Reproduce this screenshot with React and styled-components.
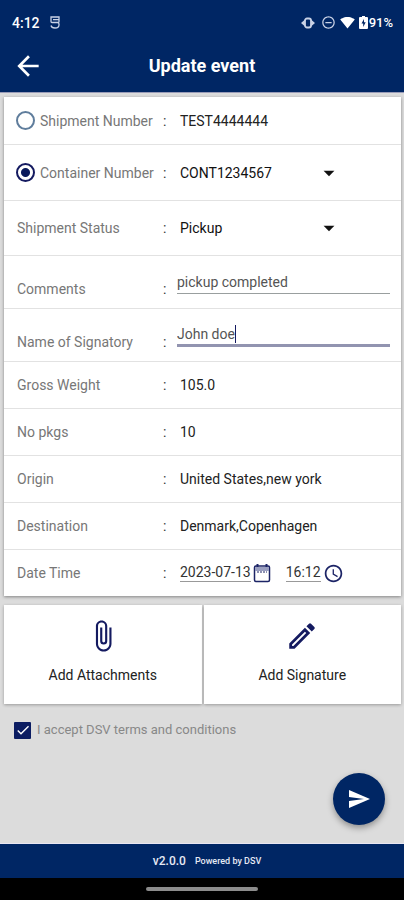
import { useState } from "react";
import styled, { createGlobalStyle } from "styled-components";
import {
  MdAccessTime,
  MdArrowBack,
  MdArrowDropDown,
  MdAttachFile,
  MdCheck,
  MdOutlineModeEdit,
  MdRemoveCircleOutline,
  MdSend,
  MdSignalWifi4Bar,
} from "react-icons/md";

const details = [
  { name: "Gross Weight", value: "105.0" },
  { name: "No pkgs", value: "10" },
  { name: "Origin", value: "United States,new york" },
  { name: "Destination", value: "Denmark,Copenhagen" },
];

function StatusBar() {
  return (
    <STStatusBar>
      <span>4:12</span>
      <svg width="10" height="13" viewBox="0 0 10 13" fill="none" stroke="#c9d2e6">
        <path
          d="M1 1H9V5.500Q9 6.500 8 6.500H2Q1 6.500 1 5.500ZM3 3.700H9M5 6.500H7.500Q9 6.500 9 8V9Q9 12 5 12Q1.500 12 1 9.500"
          strokeWidth="1.3"
        />
      </svg>
      <div className="right">
        <svg width="16" height="12" viewBox="0 0 16 12">
          <path d="M0 6L4 2.500V9.500ZM14 6L10 2.500V9.500Z" fill="#c9d2e6" />
          <rect x="4" y="1.500" width="6" height="9" rx="2" fill="none" stroke="#c9d2e6" strokeWidth="1.800" />
        </svg>
        <MdRemoveCircleOutline size={15} color="#c9d2e6" />
        <MdSignalWifi4Bar size={15} />
        <div className="battery">
          <svg width="9" height="13" viewBox="0 0 9 13">
            <path d="M3 0H6V1H8Q9 1 9 2V12Q9 13 8 13H1Q0 13 0 12V2Q0 1 1 1H3Z" fill="#fff" />
            <path d="M5 3L2.500 7.500H4.200V11L6.700 6.300H5Z" fill="#002664" />
          </svg>
          <span>91%</span>
        </div>
      </div>
    </STStatusBar>
  );
}

function CalendarIcon() {
  return (
    <svg width="18" height="20" viewBox="0 0 18 20" fill="none" stroke="#1c2466">
      <rect x="1.500" y="3" width="15" height="15.500" rx="1.500" strokeWidth="1.500" />
      <path d="M2 4H16V8H2Z" fill="#9a9fc0" stroke="none" />
      <path d="M4.500 1V4M13.500 1V4" strokeWidth="2" />
      <path d="M4 9H14" strokeDasharray="2 1" />
    </svg>
  );
}

function App() {
  const [reference, setReference] = useState("container");
  const [comments, setComments] = useState("pickup completed");
  const [signatory, setSignatory] = useState("John doe");
  const [accepted, setAccepted] = useState(true);

  return (
    <>
      <GlobalStyle />
      <STPage>
        <STHeader>
          <StatusBar />
          <STTitleBar>
            <button type="button" aria-label="Back">
              <MdArrowBack size={32} />
            </button>
            <h1>Update event</h1>
          </STTitleBar>
        </STHeader>

        <STForm onSubmit={(e) => e.preventDefault()}>
          <STCard>
            <STRow>
              <STRadioLabel>
                <input
                  type="radio"
                  name="reference"
                  checked={reference === "shipment"}
                  onChange={() => setReference("shipment")}
                />
                Shipment Number
              </STRadioLabel>
              <STColon>:</STColon>
              <STValue>TEST4444444</STValue>
            </STRow>
            <STRow $height={56}>
              <STRadioLabel>
                <input
                  type="radio"
                  name="reference"
                  checked={reference === "container"}
                  onChange={() => setReference("container")}
                />
                Container Number
              </STRadioLabel>
              <STColon>:</STColon>
              <STSelect>
                <select aria-label="Container Number value">
                  <option>CONT1234567</option>
                </select>
                <MdArrowDropDown size={26} />
              </STSelect>
            </STRow>
            <STRow $height={55}>
              <STLabel htmlFor="status">Shipment Status</STLabel>
              <STColon>:</STColon>
              <STSelect>
                <select id="status">
                  <option>Pickup</option>
                </select>
                <MdArrowDropDown size={26} />
              </STSelect>
            </STRow>
            <STRow $height={53} $field>
              <STLabel htmlFor="comments">Comments</STLabel>
              <STColon>:</STColon>
              <STTextField>
                <input
                  id="comments"
                  type="text"
                  value={comments}
                  onChange={(e) => setComments(e.target.value)}
                />
              </STTextField>
            </STRow>
            <STRow $height={53} $field>
              <STLabel htmlFor="signatory">Name of Signatory</STLabel>
              <STColon>:</STColon>
              <STTextField $active>
                <input
                  id="signatory"
                  type="text"
                  value={signatory}
                  onChange={(e) => setSignatory(e.target.value)}
                />
                <STCaret />
              </STTextField>
            </STRow>
            {details.map((detail) => (
              <STRow key={detail.name}>
                <STLabel as="span">{detail.name}</STLabel>
                <STColon>:</STColon>
                <STValue>{detail.value}</STValue>
              </STRow>
            ))}
            <STRow>
              <STLabel as="span">Date Time</STLabel>
              <STColon>:</STColon>
              <STDateTime>
                <button type="button">
                  <span>2023-07-13</span>
                  <CalendarIcon />
                </button>
                <button type="button">
                  <span>16:12</span>
                  <MdAccessTime size={21} color="#1c2466" />
                </button>
              </STDateTime>
            </STRow>
          </STCard>

          <STActions>
            <button type="button">
              <MdAttachFile size={34} color="#141a60" />
              Add Attachments
            </button>
            <button type="button">
              <MdOutlineModeEdit size={34} color="#141a60" />
              Add Signature
            </button>
          </STActions>

          <STTerms>
            <span className="box">
              <input
                type="checkbox"
                checked={accepted}
                onChange={(e) => setAccepted(e.target.checked)}
              />
              {accepted ? <MdCheck size={16} /> : null}
            </span>
            I accept DSV terms and conditions
          </STTerms>

          <STSend type="submit" aria-label="Send">
            <MdSend size={24} />
          </STSend>
        </STForm>

        <STFooter>
          <span>v2.0.0</span>
          <small>Powered by DSV</small>
        </STFooter>
        <STNavBar>
          <div />
        </STNavBar>
      </STPage>
    </>
  );
}

export default App;

const GlobalStyle = createGlobalStyle`
  * {
    box-sizing: border-box;
  }
  body {
    margin: 0;
    font-family: Roboto, "Liberation Sans", sans-serif;
    font-size: 14px;
    line-height: 20px;
  }
  button, input, select {
    margin: 0;
    padding: 0;
    border: none;
    outline: none;
    background: transparent;
    font: inherit;
    color: inherit;
  }
  button {
    cursor: pointer;
  }
  svg {
    flex-shrink: 0;
  }
`;

const STPage = styled.div`
  min-height: 100vh;
  display: flex;
  flex-direction: column;
  background-color: #dcdcdc;
`;

const STHeader = styled.header`
  background-color: #002664;
  color: #fff;
  border-bottom: 1px solid #9a9cb8;
`;

const STStatusBar = styled.div`
  height: 40px;
  display: flex;
  align-items: center;
  gap: 10px;
  padding: 5px 11px 0 12px;
  font-weight: 500;
  .right {
    margin-left: auto;
    display: flex;
    align-items: center;
    gap: 4px;
    font-size: 13px;
  }
  .battery {
    display: flex;
    align-items: center;
    gap: 1px;
  }
`;

const STTitleBar = styled.div`
  height: 52px;
  display: grid;
  grid-template-columns: 32px 1fr 32px;
  align-items: center;
  padding: 0 12px;
  button {
    display: flex;
  }
  h1 {
    margin: 0;
    font-size: 18px;
    font-weight: 700;
    text-align: center;
  }
`;

const STForm = styled.form`
  flex: 1;
  display: flex;
  flex-direction: column;
  padding: 4px 3px 18px 4px;
`;

const STCard = styled.section`
  background-color: #fff;
  box-shadow: 0 1px 3px rgba(0, 0, 0, 0.4);
`;

const STRow = styled.div`
  height: ${(props) => props.$height || 47}px;
  display: grid;
  grid-template-columns: 146px 17px 1fr;
  align-items: ${(props) => (props.$field ? "end" : "center")};
  padding: ${(props) => (props.$field ? "0 11px 9px 13px" : "0 11px 0 13px")};
  & + & {
    border-top: 1px solid #e2e2e2;
  }
`;

const STLabel = styled.label`
  color: #777;
`;

const STRadioLabel = styled.label`
  display: flex;
  align-items: center;
  gap: 5px;
  margin-left: -1px;
  color: #777;
  white-space: nowrap;
  input {
    appearance: none;
    width: 19px;
    height: 19px;
    border: 2px solid #5f7d9c;
    border-radius: 50%;
  }
  input:checked {
    border-color: #141a60;
    background: radial-gradient(circle, #0a1a5c 4px, transparent 5px);
  }
`;

const STColon = styled.span`
  color: #333;
`;

const STValue = styled.span`
  color: #222;
`;

const STSelect = styled.div`
  width: 162px;
  display: grid;
  align-items: center;
  color: #111;
  select {
    grid-area: 1 / 1;
    appearance: none;
    width: 100%;
  }
  svg {
    grid-area: 1 / 1;
    justify-self: end;
    pointer-events: none;
  }
`;

const STTextField = styled.div`
  display: flex;
  align-items: center;
  height: 23px;
  margin: 0 0 5px -3px;
  border-bottom: ${(props) =>
    props.$active ? "3px solid #9294b0" : "1px solid #999f9f"};
  color: #555;
  input {
    min-width: 0;
    flex: ${(props) => (props.$active ? "none" : 1)};
    field-sizing: content;
    caret-color: ${(props) => (props.$active ? "transparent" : "auto")};
  }
`;

const STCaret = styled.span`
  width: 1px;
  height: 18px;
  background-color: #141a60;
`;

const STDateTime = styled.div`
  display: flex;
  gap: 15px;
  color: #333;
  button {
    display: flex;
    align-items: center;
    gap: 2px;
  }
  span {
    line-height: 17px;
    border-bottom: 1px solid #999;
  }
`;

const STActions = styled.div`
  display: grid;
  grid-template-columns: 1fr 1fr;
  gap: 2px;
  margin-top: 9px;
  button {
    height: 99px;
    display: flex;
    flex-direction: column;
    align-items: center;
    justify-content: center;
    gap: 12px;
    padding-bottom: 6px;
    background-color: #fff;
    box-shadow: 0 1px 3px rgba(0, 0, 0, 0.3);
    color: #222;
  }
`;

const STTerms = styled.label`
  display: flex;
  align-items: center;
  gap: 6px;
  margin: 16px 0 0 10px;
  color: #888;
  font-size: 13px;
  .box {
    display: grid;
    place-items: center;
    color: #fff;
  }
  .box > * {
    grid-area: 1 / 1;
  }
  svg {
    pointer-events: none;
  }
  input {
    appearance: none;
    width: 17px;
    height: 17px;
    border: 2px solid #0b1c62;
    border-radius: 1px;
  }
  input:checked {
    background-color: #0b1c62;
  }
`;

const STSend = styled.button`
  width: 52px;
  height: 52px;
  display: flex;
  align-items: center;
  justify-content: center;
  align-self: flex-end;
  margin: auto 16px 0 0;
  border-radius: 50%;
  background-color: #002664;
  color: #fff;
  box-shadow: 0 3px 6px rgba(0, 0, 0, 0.35);
`;

const STFooter = styled.footer`
  height: 35px;
  display: flex;
  align-items: center;
  justify-content: center;
  gap: 9px;
  padding-left: 10px;
  border-top: 1px solid #e8e6f2;
  background-color: #002664;
  color: #e6eaf4;
  font-size: 12px;
  font-weight: 500;
  small {
    font-size: 9px;
  }
`;

const STNavBar = styled.div`
  height: 22px;
  display: flex;
  align-items: center;
  justify-content: center;
  background-color: #000;
  div {
    width: 112px;
    height: 4px;
    border-radius: 2px;
    background-color: #8c8c8c;
  }
`;
